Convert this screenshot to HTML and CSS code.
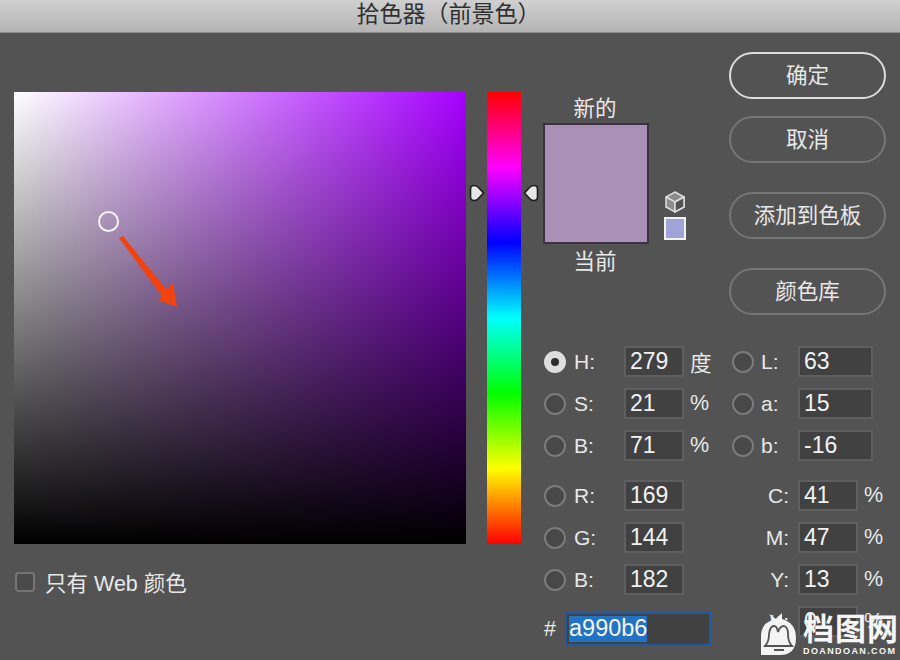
FILE: index.html
```html
<!DOCTYPE html>
<html lang="zh-CN">
<head>
  <meta charset="UTF-8" />
  <title>拾色器（前景色）</title>
  <link rel="stylesheet" href="styles.css">
</head>
<body>

<div class="title-bar">拾色器（前景色）</div>

<div class="main">
  <div class="left">
    <div class="color-field">
      <div class="field-cursor"></div>
      <svg class="field-arrow" width="70" height="80" viewBox="0 0 70 80">
        <polygon points="14,2 18,0 61,53 68,47 72,71 53,64 57,60" fill="#f1420f" transform="translate(-14 0)"/>
      </svg>
    </div>
    <div class="web-only">
      <span class="checkbox"></span>
      <span>只有 Web 颜色</span>
    </div>
  </div>

  <div class="hue-strip">
    <svg class="hue-mark hue-mark-left" width="16" height="18" viewBox="0 0 16 18">
      <path d="M5 1.5 Q8 1.5 10 4 L14.5 9 L10 14 Q8 16.5 5 16.5 Q1.5 16.5 1.5 13 V5 Q1.5 1.5 5 1.5 Z" fill="#e6e6e6" stroke="#1c1c1c" stroke-width="1.6"/>
    </svg>
    <svg class="hue-mark hue-mark-right" width="16" height="18" viewBox="0 0 16 18">
      <path d="M11 1.5 Q8 1.5 6 4 L1.5 9 L6 14 Q8 16.5 11 16.5 Q14.5 16.5 14.5 13 V5 Q14.5 1.5 11 1.5 Z" fill="#e6e6e6" stroke="#1c1c1c" stroke-width="1.6"/>
    </svg>
  </div>

  <div class="right">
    <div class="right-top">
      <div class="preview">
        <div class="preview-label">新的</div>
        <div class="preview-box"></div>
        <div class="preview-label preview-label-low">当前</div>
      </div>
      <div class="gamut">
        <svg width="22" height="24" viewBox="0 0 22 24">
          <path d="M11 2 L20 7 V17 L11 22 L2 17 V7 Z" fill="#8c8c8c" stroke="#dedede" stroke-width="1.5"/>
          <path d="M2 7 L11 12 L20 7 M11 12 V22" fill="none" stroke="#dedede" stroke-width="1.5"/>
          <path d="M11 12 L20 7 V17 L11 22 Z" fill="#535353" stroke="#dedede" stroke-width="1.5"/>
        </svg>
        <div class="web-swatch"></div>
      </div>
      <div class="buttons">
        <div class="btn btn-default">确定</div>
        <div class="btn">取消</div>
        <div class="btn btn-add">添加到色板</div>
        <div class="btn btn-lib">颜色库</div>
      </div>
    </div>

    <div class="fields">
      <span class="radio radio-on"></span><span class="lbl">H:</span><div class="box">279</div><span class="unit">度</span>
      <span class="radio"></span><span class="lbl">L:</span><div class="box box-wide">63</div>

      <span class="radio"></span><span class="lbl">S:</span><div class="box">21</div><span class="unit">%</span>
      <span class="radio"></span><span class="lbl">a:</span><div class="box box-wide">15</div>

      <span class="radio"></span><span class="lbl">B:</span><div class="box">71</div><span class="unit">%</span>
      <span class="radio"></span><span class="lbl">b:</span><div class="box box-wide">-16</div>
    </div>

    <div class="fields fields-low">
      <span class="radio"></span><span class="lbl">R:</span><div class="box">169</div><span class="unit"></span>
      <span class="lbl lbl-right">C:</span><div class="box">41</div><span class="unit">%</span>

      <span class="radio"></span><span class="lbl">G:</span><div class="box">144</div><span class="unit"></span>
      <span class="lbl lbl-right">M:</span><div class="box">47</div><span class="unit">%</span>

      <span class="radio"></span><span class="lbl">B:</span><div class="box">182</div><span class="unit"></span>
      <span class="lbl lbl-right">Y:</span><div class="box">13</div><span class="unit">%</span>

      <div class="hex-row">
        <span class="hash">#</span>
        <div class="hex-box"><span class="hex-sel">a990b6</span></div>
      </div>
      <span class="lbl lbl-right">K:</span><div class="box">0</div><span class="unit">%</span>
    </div>
  </div>
</div>

<div class="watermark">
  <svg width="37" height="43" viewBox="0 0 37 43">
    <path d="M1 24 Q1 10 13 7 L9 1 L16 6 L22 0 L22 6 Q36 10 36 25 Q36 42 20 42 H1 Z" fill="#f4f4f4"/>
    <path d="M5 33 Q9 29 9 21 Q10 13 14 13 Q17 13 18 19 Q20 13 24 13 Q28 14 28 21 Q28 29 32 33 Z M14 37 H24" fill="none" stroke="#535353" stroke-width="1.8"/>
  </svg>
  <div class="wm-text">
    <div class="wm-name">档图网</div>
    <div class="wm-url">DOANDOAN.COM</div>
  </div>
</div>

</body>
</html>
```

FILE: styles.css
```css
html, body { margin: 0; height: 100%; }
body {
  width: 900px;
  height: 660px;
  overflow: hidden;
  position: relative;
  background: #535353;
  color: #e8e8e8;
  font-family: "Liberation Sans", "Noto Sans CJK SC", sans-serif;
  font-size: 21.5px;
}

.title-bar {
  height: 33px;
  line-height: 28px;
  text-align: center;
  padding-right: 3px;
  font-size: 23px;
  color: #303030;
  background: linear-gradient(#d0d0d0, #b4b4b4);
  border-bottom: 1px solid #8e8e8e;
  box-sizing: border-box;
}

.main {
  display: flex;
  padding: 19px 14px 0;
}

.left { width: 452px; padding-top: 40px; }

.color-field {
  position: relative;
  width: 452px;
  height: 452px;
  background:
    linear-gradient(to top, #000, rgba(0,0,0,0)),
    linear-gradient(to right, #fff, #a600ff);
}

.field-cursor {
  position: absolute;
  left: 84px;
  top: 119px;
  width: 17px;
  height: 17px;
  border: 2px solid #f4f4f4;
  border-radius: 50%;
}

.field-arrow { position: absolute; left: 105px; top: 144px; }

.web-only {
  display: flex;
  align-items: center;
  gap: 10px;
  margin-top: 22px;
  margin-left: 1px;
}

.checkbox {
  width: 16px;
  height: 16px;
  background: #4a4a4a;
  border: 2px solid #757575;
  border-radius: 4px;
}

.hue-strip {
  position: relative;
  flex: none;
  width: 34px;
  height: 452px;
  margin: 40px 0 0 21px;
  background: linear-gradient(#f00, #f0f 16.67%, #00f 33.33%, #0ff 50%, #0f0 66.67%, #ff0 83.33%, #f00);
}

.hue-mark { position: absolute; top: 92px; }
.hue-mark-left { left: -18px; }
.hue-mark-right { right: -18px; }

.right { flex: none; width: 343px; margin-left: 22px; }

.right-top { display: flex; height: 264px; margin-bottom: 30px; }

.preview { width: 106px; padding-top: 43px; text-align: center; }
.preview-label { height: 28px; line-height: 28px; margin-left: -2px; }
.preview-label-low { margin-top: 4px; }

.preview-box {
  height: 117px;
  background: #a990b6;
  border: 2px solid #3b3140;
}

.gamut {
  width: 22px;
  margin: 138px 0 0 15px;
  display: flex;
  flex-direction: column;
  gap: 3px;
}

.web-swatch {
  width: 18px;
  height: 19px;
  background: #9fa3d6;
  border: 2px solid #f2f2f2;
}

.buttons { margin-left: auto; width: 157px; }

.btn {
  height: 47px;
  line-height: 45px;
  box-sizing: border-box;
  text-align: center;
  border: 2px solid #767676;
  border-radius: 24px;
  margin-bottom: 17px;
}
.btn-default { border-color: #dcdcdc; }
.btn-add { margin-top: 29px; margin-bottom: 29px; }

.fields {
  display: grid;
  grid-template-columns: 30px 51px 60px 47px 29px 38px 60px 28px;
  grid-auto-rows: 31px;
  row-gap: 11px;
  align-items: center;
}
.fields-low { margin-top: 19px; }

.radio {
  width: 18px;
  height: 18px;
  margin-left: 1px;
  background: #484848;
  border: 2px solid #7b7b7b;
  border-radius: 50%;
}

.radio-on {
  width: 8px;
  height: 8px;
  background: #2e2e2e;
  border: 7px solid #dedede;
}

.lbl { line-height: 31px; font-size: 21px; padding-left: 1px; }
.lbl-right { grid-column: 5 / span 2; text-align: right; padding-right: 9px; }

.box {
  box-sizing: border-box;
  height: 31px;
  line-height: 27px;
  padding-left: 4px;
  font-size: 23px;
  color: #f2f2f2;
  background: #414141;
  border: 2px solid #5f5f5f;
}
.box-wide { grid-column: span 2; width: 75px; }

.unit { padding-left: 6px; }

.hex-row {
  grid-column: 1 / span 4;
  align-self: start;
  display: flex;
  align-items: center;
  margin-top: 6px;
  padding-left: 1px;
}

.hash { width: 22px; margin-right: -1px; }

.hex-box {
  box-sizing: border-box;
  width: 146px;
  height: 34px;
  padding: 2px;
  line-height: 25px;
  font-size: 23.5px;
  background: #414141;
  border: 2px solid #1f5aa0;
}

.hex-sel { display: inline-block; height: 26px; background: #2273c4; color: #f4f4f4; }

.watermark {
  position: absolute;
  left: 760px;
  top: 613px;
  display: flex;
  gap: 6px;
  color: #f6f6f6;
}

.wm-name { font-size: 31px; line-height: 34px; font-weight: 700; letter-spacing: 1px; white-space: nowrap; }
.wm-url { font-size: 9px; line-height: 9px; font-weight: 700; letter-spacing: 1.4px; white-space: nowrap; }
```
